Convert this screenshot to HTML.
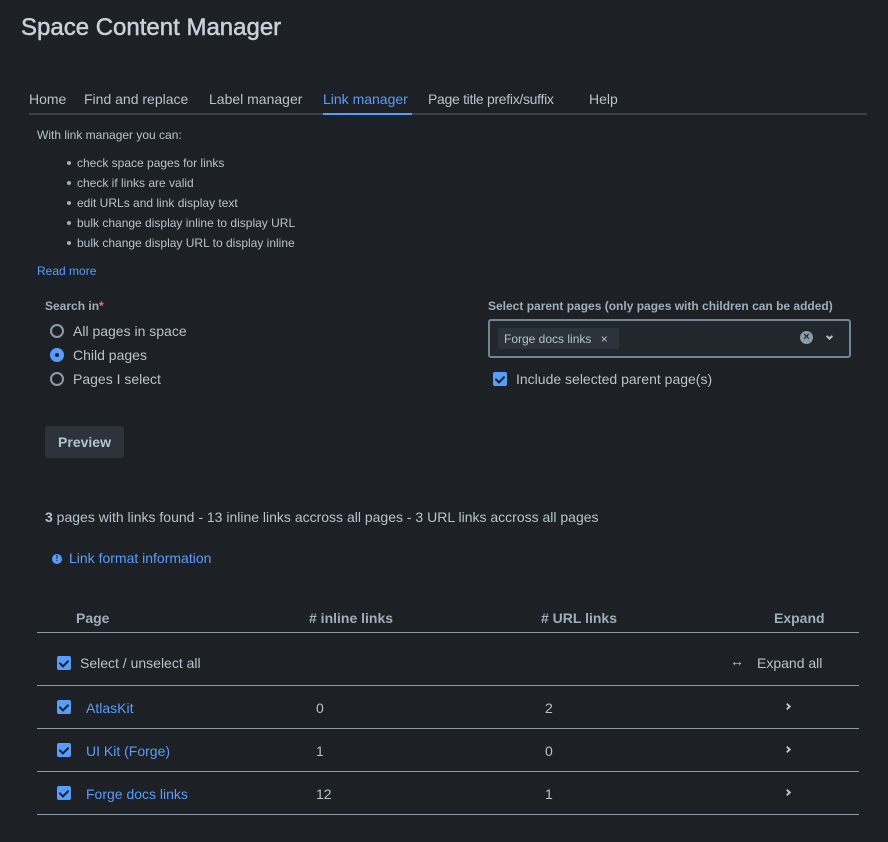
<!DOCTYPE html>
<html><head><style>
*{margin:0;padding:0;box-sizing:border-box}
body{width:888px;height:842px;background:#1d2125;color:#b6c2cf;font-family:"Liberation Sans",Arial,sans-serif;position:relative;overflow:hidden}
.a{position:absolute;white-space:nowrap}
.blue{color:#579dff}
.cb{position:absolute;width:14px;height:14px;background:#579dff;border-radius:2px}
.cb:after{content:"";position:absolute;left:4px;top:1.5px;width:4px;height:7px;border:solid #1d2125;border-width:0 2px 2px 0;transform:rotate(45deg)}
.rad{position:absolute;width:14px;height:14px;border:2px solid #8c9bab;border-radius:50%}
.line{position:absolute;left:37px;width:822px;height:1px;background:#8c9bab}
.chev{position:absolute;width:6px;height:6px;border:solid #b6c2cf;border-width:2px 2px 0 0;transform:rotate(45deg)}
li{list-style:none;position:relative}
li:before{content:"";position:absolute;left:-10px;top:8px;width:4px;height:4px;border-radius:50%;background:#9fadbc}
</style></head><body>
<div class="a" style="left:21px;top:14px;font-size:24px;color:#c7d1db;-webkit-text-stroke:0.5px #c7d1db">Space Content Manager</div>
<div class="a" style="left:29px;top:91px;font-size:14px">Home</div>
<div class="a" style="left:84px;top:91px;font-size:14px">Find and replace</div>
<div class="a" style="left:209px;top:91px;font-size:14px">Label manager</div>
<div class="a blue" style="left:323px;top:91px;font-size:14px">Link manager</div>
<div class="a" style="left:428px;top:91px;font-size:14px;letter-spacing:-0.3px">Page title prefix/suffix</div>
<div class="a" style="left:589px;top:91px;font-size:14px">Help</div>
<div class="a" style="left:29px;top:113px;width:838px;height:2px;background:#38414a"></div>
<div class="a" style="left:323px;top:113px;width:89px;height:2px;background:#579dff"></div>
<div class="a" style="left:37px;top:128px;font-size:12px">With link manager you can:</div>
<ul class="a" style="left:77px;top:153px;font-size:12px;line-height:20px">
<li>check space pages for links</li><li>check if links are valid</li><li>edit URLs and link display text</li><li>bulk change display inline to display URL</li><li>bulk change display URL to display inline</li></ul>
<div class="a blue" style="left:37px;top:264px;font-size:12px">Read more</div>
<div class="a" style="left:45px;top:299px;font-size:12px;font-weight:bold;color:#9fadbc">Search in<span style="color:#f87168">*</span></div>
<div class="rad" style="left:50px;top:324px"></div>
<div class="a" style="left:73px;top:323px;font-size:14px">All pages in space</div>
<div class="rad" style="left:50px;top:348px;background:#579dff;border-color:#579dff"><div style="position:absolute;left:3px;top:3px;width:4px;height:4px;border-radius:50%;background:#1d2125"></div></div>
<div class="a" style="left:73px;top:347px;font-size:14px">Child pages</div>
<div class="rad" style="left:50px;top:372px"></div>
<div class="a" style="left:73px;top:371px;font-size:14px">Pages I select</div>
<div class="a" style="left:488px;top:299px;font-size:12px;font-weight:bold;color:#9fadbc">Select parent pages (only pages with children can be added)</div>
<div class="a" style="left:488px;top:319px;width:363px;height:39px;border:2px solid #738496;border-radius:3px;background:#22272b"></div>
<div class="a" style="left:498px;top:328px;width:121px;height:21px;background:#2c333a;border-radius:2px;font-size:12px;padding:4px 6px">Forge docs links <span style="margin-left:6px">×</span></div>
<div class="a" style="left:800px;top:331px;width:13px;height:13px;border-radius:50%;background:#8c9bab;color:#22272b;font-size:11px;line-height:13px;text-align:center;font-weight:bold">×</div>
<div class="chev" style="left:827px;top:334px;width:5px;height:5px;transform:rotate(135deg)"></div>
<div class="cb" style="left:493px;top:372px"></div>
<div class="a" style="left:516px;top:371px;font-size:14px">Include selected parent page(s)</div>
<div class="a" style="left:45px;top:426px;width:79px;height:32px;background:#2c333a;border-radius:3px;font-size:14px;font-weight:bold;text-align:center;line-height:32px;color:#b6c2cf">Preview</div>
<div class="a" style="left:45px;top:509px;font-size:14px"><b>3</b> pages with links found - 13 inline links accross all pages - 3 URL links accross all pages</div>
<div class="a" style="left:52px;top:554px;width:10px;height:10px;border-radius:50%;background:#579dff;color:#1d2125;font-size:8px;line-height:10px;text-align:center;font-weight:bold">!</div>
<div class="a blue" style="left:69px;top:550px;font-size:14px">Link format information</div>
<div class="a" style="left:76px;top:610px;font-size:14px;font-weight:bold;color:#9fadbc">Page</div>
<div class="a" style="left:309px;top:610px;font-size:14px;font-weight:bold;color:#9fadbc"># inline links</div>
<div class="a" style="left:541px;top:610px;font-size:14px;font-weight:bold;color:#9fadbc"># URL links</div>
<div class="a" style="left:774px;top:610px;font-size:14px;font-weight:bold;color:#9fadbc">Expand</div>
<div class="line" style="top:632px"></div>
<div class="cb" style="left:57px;top:656px"></div>
<div class="a" style="left:80px;top:655px;font-size:14px">Select / unselect all</div>
<div class="a" style="left:730px;top:653px;font-size:14px;font-weight:bold">↔</div>
<div class="a" style="left:757px;top:655px;font-size:14px">Expand all</div>
<div class="line" style="top:685px"></div>
<div class="cb" style="left:57px;top:700px"></div>
<div class="a blue" style="left:86px;top:700px;font-size:14px">AtlasKit</div>
<div class="a" style="left:316px;top:700px;font-size:14px">0</div>
<div class="a" style="left:545px;top:700px;font-size:14px">2</div>
<div class="chev" style="left:785px;top:704px;width:5px;height:5px"></div>
<div class="line" style="top:728px"></div>
<div class="cb" style="left:57px;top:743px"></div>
<div class="a blue" style="left:86px;top:743px;font-size:14px">UI Kit (Forge)</div>
<div class="a" style="left:316px;top:743px;font-size:14px">1</div>
<div class="a" style="left:545px;top:743px;font-size:14px">0</div>
<div class="chev" style="left:785px;top:747px;width:5px;height:5px"></div>
<div class="line" style="top:771px"></div>
<div class="cb" style="left:57px;top:786px"></div>
<div class="a blue" style="left:86px;top:786px;font-size:14px">Forge docs links</div>
<div class="a" style="left:316px;top:786px;font-size:14px">12</div>
<div class="a" style="left:545px;top:786px;font-size:14px">1</div>
<div class="chev" style="left:785px;top:790px;width:5px;height:5px"></div>
<div class="line" style="top:814px"></div>
</body></html>
